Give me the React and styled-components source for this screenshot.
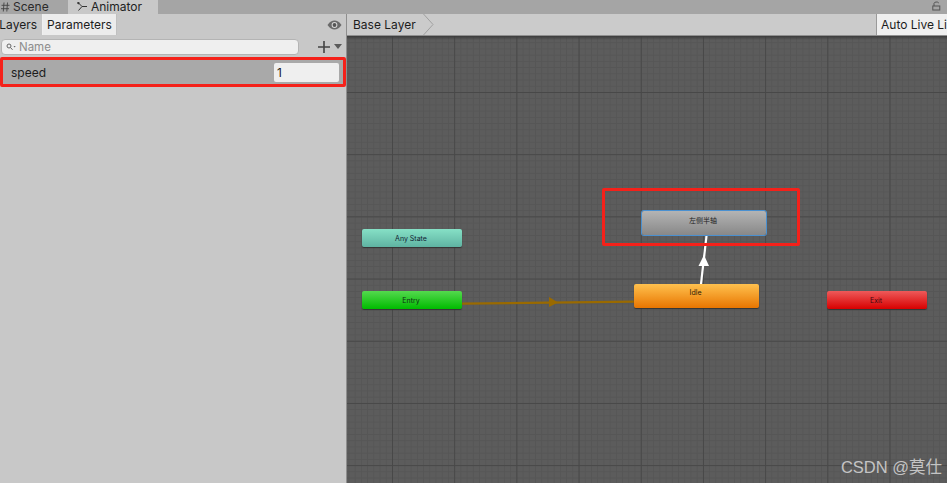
import React from 'react';
import styled, { createGlobalStyle } from 'styled-components';

const GlobalStyle = createGlobalStyle`
  html, body {
    margin: 0;
    padding: 0;
    width: 947px;
    height: 483px;
    overflow: hidden;
    font-family: "Inter", "Liberation Sans", sans-serif;
    color: #1c1c1c;
  }
`;

const Page = styled.div`
  position: relative;
  width: 947px;
  height: 483px;
  overflow: hidden;
  display: flex;
  flex-direction: column;
  background: #c8c8c8;
`;

const TabBar = styled.div`
  height: 14px;
  flex: none;
  display: flex;
  align-items: stretch;
  justify-content: space-between;
  background: #a5a5a5;
`;

const Tabs = styled.div`
  display: flex;
`;

const WindowTab = styled.div`
  width: ${p => p.$w}px;
  display: flex;
  align-items: center;
  gap: ${p => p.$gap}px;
  padding-left: ${p => p.$pad}px;
  box-sizing: border-box;
  font-size: 12px;
  line-height: 14px;
  overflow: hidden;
  background: ${p => (p.$active ? '#c8c8c8' : 'transparent')};
  color: ${p => (p.$active ? '#222' : '#2a2a2a')};
`;

const LockBox = styled.div`
  width: 15px;
  display: flex;
  align-items: flex-start;
  padding-top: 1px;
`;

const Body = styled.div`
  flex: 1;
  display: flex;
  min-height: 0;
`;

const Side = styled.div`
  width: 346px;
  flex: none;
  display: flex;
  flex-direction: column;
  background: #c8c8c8;
  border-right: 1px solid #8e8e8e;
`;

const SideTabs = styled.div`
  height: 21px;
  flex: none;
  display: flex;
  align-items: stretch;
  padding-right: 4px;
`;

const SideTab = styled.div`
  width: ${p => p.$w}px;
  box-sizing: border-box;
  display: flex;
  align-items: center;
  justify-content: ${p => (p.$cut ? 'flex-end' : 'center')};
  padding-right: ${p => (p.$cut ? 5 : 0)}px;
  font-size: 12px;
  background: ${p => (p.$active ? '#ececec' : 'transparent')};
  border-right: 1px solid ${p => (p.$active ? '#c0c0c0' : '#f0f0f0')};
`;

const EyeBox = styled.div`
  margin-left: auto;
  display: flex;
  align-items: center;
`;

const SearchRow = styled.div`
  height: 23px;
  flex: none;
  display: flex;
  align-items: center;
  gap: 19px;
  padding: 0 3px 0 1px;
`;

const SearchField = styled.div`
  width: 298px;
  height: 16px;
  box-sizing: border-box;
  display: flex;
  align-items: center;
  gap: 3px;
  padding-left: 4px;
  background: #efefef;
  border: 1px solid #b4b4b4;
  border-radius: 4px;
  font-size: 11.5px;
  color: #8d8d8d;
`;

const AddButton = styled.div`
  display: flex;
  align-items: center;
  gap: 4px;
`;

const ParamRow = styled.div`
  height: 25px;
  flex: none;
  display: flex;
  align-items: center;
  margin-top: 2px;
  padding: 0 7px 0 11px;
  background: #a9a9a9;
  font-size: 12px;
`;

const ParamName = styled.span`
  flex: 1;
`;

const ParamValue = styled.div`
  width: 65px;
  height: 19px;
  box-sizing: border-box;
  display: flex;
  align-items: center;
  padding-left: 3px;
  background: #efefef;
  border-radius: 2px;
  font-size: 12px;
`;

const Main = styled.div`
  flex: 1;
  display: flex;
  flex-direction: column;
  min-width: 0;
`;

const Breadcrumb = styled.div`
  height: 22px;
  flex: none;
  box-sizing: border-box;
  display: flex;
  align-items: stretch;
  justify-content: space-between;
  background: #cbcbcb;
  border-bottom: 1px solid #8f8f8f;
`;

const Crumb = styled.div`
  display: flex;
  align-items: center;
  gap: 7px;
  padding-left: 6px;
  font-size: 12px;
`;

const LiveLink = styled.div`
  width: 71px;
  box-sizing: border-box;
  padding-left: 4px;
  display: flex;
  align-items: center;
  white-space: nowrap;
  overflow: hidden;
  font-size: 12px;
  background: #efefef;
  border-left: 1px solid #9a9a9a;
`;

const Graph = styled.div`
  position: relative;
  flex: 1;
  background-color: #5c5c5c;
  background-image:
    linear-gradient(to right, #484848 1px, transparent 1px),
    linear-gradient(to bottom, #484848 1px, transparent 1px),
    linear-gradient(to right, #565656 1px, transparent 1px),
    linear-gradient(to bottom, #565656 1px, transparent 1px);
  background-size: 62.2px 62.2px, 62.2px 62.2px, 6.22px 6.22px, 6.22px 6.22px;
  background-position: 45px 56px, 45px 56px, 45px 56px, 45px 56px;
`;

const TopShade = styled.div`
  position: absolute;
  left: 0;
  right: 0;
  top: 0;
  height: 4px;
  background: linear-gradient(to bottom, #3c3c3c, transparent);
`;

const Wires = styled.svg`
  position: absolute;
  left: 0;
  top: 0;
`;

const Node = styled.div`
  position: absolute;
  left: ${p => p.$x}px;
  top: ${p => p.$y}px;
  width: ${p => p.$w}px;
  height: ${p => p.$h}px;
  box-sizing: border-box;
  display: flex;
  align-items: center;
  justify-content: center;
  padding: 0 2px ${p => p.$lift}px 0;
  border-radius: 2px;
  font-size: 7px;
  font-family: "Inter", "Noto Sans CJK SC", sans-serif;
  color: ${p => p.$ink};
  background: linear-gradient(to bottom, ${p => p.$from}, ${p => p.$to});
  box-shadow: ${p => (p.$picked ? '0 0 0 1px #4a90d0' : '0 1px 1px #333')};
`;

const Mark = styled.div`
  position: absolute;
  left: ${p => p.$x}px;
  top: ${p => p.$y}px;
  width: ${p => p.$w}px;
  height: ${p => p.$h}px;
  box-sizing: border-box;
  border: 3px solid #f5211a;
  border-radius: 2px;
`;

const Watermark = styled.div`
  position: absolute;
  right: 5px;
  bottom: 4px;
  font-family: "Liberation Sans", "Noto Sans CJK SC", sans-serif;
  font-size: 16.5px;
  line-height: 24px;
  color: #c4c4c4;
`;

const App = () => {
  return (
    <Page>
      <GlobalStyle />
      <TabBar>
        <Tabs>
          <WindowTab $w={68} $pad={1} $gap={3}>
            <svg width="9" height="10" viewBox="0 0 9 10" fill="none" stroke="#444" strokeWidth="0.9">
              <path d="M3 0.5 2.3 9.5M6.5 0.5 5.8 9.5M0.5 3.3h8M0 6.7h8" />
            </svg>
            Scene
          </WindowTab>
          <WindowTab $w={90} $pad={9} $gap={3} $active>
            <svg width="11" height="10" viewBox="0 0 11 10" fill="none" stroke="#333" strokeWidth="1">
              <path d="M1.5 1 5 4.5H10M5 4.5 1.5 8.5" />
              <circle cx="1.4" cy="1" r="0.8" fill="#333" />
            </svg>
            Animator
          </WindowTab>
        </Tabs>
        <LockBox>
          <svg width="9" height="10" viewBox="0 0 9 10" fill="none" stroke="#555" strokeWidth="1">
            <rect x="0.8" y="5" width="7" height="4" />
            <path d="M2 5V2.4C2 0.8 6 0.4 6.8 2" />
          </svg>
        </LockBox>
      </TabBar>
      <Body>
        <Side>
          <SideTabs>
            <SideTab $w={43} $cut>Layers</SideTab>
            <SideTab $w={74} $active>Parameters</SideTab>
            <EyeBox>
              <svg width="15" height="10" viewBox="0 0 15 10">
                <path d="M0.5 5C3 1.5 5 0.6 7.5 0.6S12 1.5 14.5 5C12 8.5 10 9.4 7.5 9.4S3 8.5 0.5 5Z" fill="#6a6a6a" />
                <circle cx="7.5" cy="5" r="2.9" fill="#d8d8d8" />
                <circle cx="7.5" cy="5" r="1.9" fill="#555" />
              </svg>
            </EyeBox>
          </SideTabs>
          <SearchRow>
            <SearchField>
              <svg width="10" height="8" viewBox="0 0 10 8" fill="none" stroke="#666" strokeWidth="1">
                <circle cx="3" cy="3" r="2" />
                <path d="M4.5 4.5 6.5 6.8" />
                <path d="M7.5 3h2.2L8.6 4.4Z" fill="#666" stroke="none" />
              </svg>
              Name
            </SearchField>
            <AddButton>
              <svg width="12" height="12" viewBox="0 0 12 12" stroke="#444" strokeWidth="1.6">
                <path d="M6 0v12M0 6h12" />
              </svg>
              <svg width="8" height="5" viewBox="0 0 8 5">
                <path d="M0 0h8L4 5Z" fill="#5a5a5a" />
              </svg>
            </AddButton>
          </SearchRow>
          <ParamRow>
            <ParamName>speed</ParamName>
            <ParamValue>1</ParamValue>
          </ParamRow>
        </Side>
        <Main>
          <Breadcrumb>
            <Crumb>
              Base Layer
              <svg width="11" height="21" viewBox="0 0 11 21" fill="none" stroke="#a0a0a0" strokeWidth="1">
                <path d="M0.5 0 10 10.5 0.5 21" />
              </svg>
            </Crumb>
            <LiveLink>Auto Live Link</LiveLink>
          </Breadcrumb>
          <Graph>
            <TopShade />
            <Wires width="600" height="447" viewBox="0 0 600 447">
              <path d="M115 267.7 L287 265.7" stroke="#9a6a00" strokeWidth="2.2" fill="none" />
              <path d="M202 261 L211 266.5 L202 271 Z" fill="#9a6a00" />
              <path d="M354 248 L359.6 199" stroke="#fff" strokeWidth="2.2" fill="none" />
              <path d="M357 219 L351.5 230 L362 230 Z" fill="#fff" />
            </Wires>
            <Node $x={15} $y={193} $w={100} $h={18} $lift={0} $from="#86e0c6" $to="#5fb3a2" $ink="#123">Any State</Node>
            <Node $x={15} $y={255} $w={100} $h={18} $lift={0} $from="#54d94e" $to="#00bb00" $ink="#0c2a14">Entry</Node>
            <Node $x={287} $y={248} $w={125} $h={24} $lift={8} $from="#ffc14e" $to="#e87500" $ink="#2a1a08">Idle</Node>
            <Node $x={480} $y={255} $w={100} $h={18} $lift={0} $from="#ee5a5a" $to="#d80000" $ink="#3a0810">Exit</Node>
            <Node $x={295} $y={175} $w={124} $h={24} $lift={6} $from="#b4b4b4" $to="#888888" $ink="#222" $picked>左侧半轴</Node>
            <Watermark>CSDN @莫仕</Watermark>
          </Graph>
        </Main>
      </Body>
      <Mark $x={0} $y={57} $w={346} $h={30} />
      <Mark $x={602} $y={188} $w={198} $h={58} />
    </Page>
  );
};

export default App;
